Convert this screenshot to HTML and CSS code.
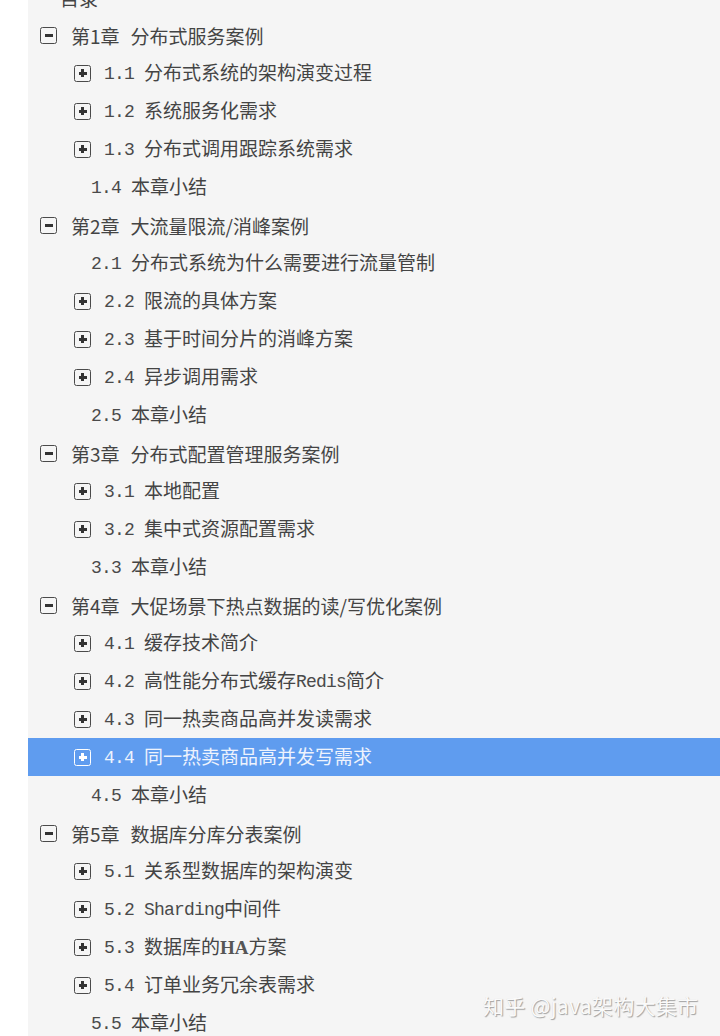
FILE: index.html
```html
<!DOCTYPE html>
<html lang="zh-CN">
<head>
<meta charset="utf-8">
<title>目录</title>
<link rel="stylesheet" href="styles.css">
</head>
<body>
<div class="panel">
  <div class="row title">目录</div>

  <div class="row chapter"><span class="box minus"></span><span class="txt">第1章<span class="ct">分布式服务案例</span></span></div>
  <div class="row sec"><span class="box plus"></span><span class="txt"><span class="n">1.1 </span>分布式系统的架构演变过程</span></div>
  <div class="row sec"><span class="box plus"></span><span class="txt"><span class="n">1.2 </span>系统服务化需求</span></div>
  <div class="row sec"><span class="box plus"></span><span class="txt"><span class="n">1.3 </span>分布式调用跟踪系统需求</span></div>
  <div class="row leaf"><span class="txt"><span class="n">1.4 </span>本章小结</span></div>

  <div class="row chapter"><span class="box minus"></span><span class="txt">第2章<span class="ct">大流量限流/消峰案例</span></span></div>
  <div class="row leaf"><span class="txt"><span class="n">2.1 </span>分布式系统为什么需要进行流量管制</span></div>
  <div class="row sec"><span class="box plus"></span><span class="txt"><span class="n">2.2 </span>限流的具体方案</span></div>
  <div class="row sec"><span class="box plus"></span><span class="txt"><span class="n">2.3 </span>基于时间分片的消峰方案</span></div>
  <div class="row sec"><span class="box plus"></span><span class="txt"><span class="n">2.4 </span>异步调用需求</span></div>
  <div class="row leaf"><span class="txt"><span class="n">2.5 </span>本章小结</span></div>

  <div class="row chapter"><span class="box minus"></span><span class="txt">第3章<span class="ct">分布式配置管理服务案例</span></span></div>
  <div class="row sec"><span class="box plus"></span><span class="txt"><span class="n">3.1 </span>本地配置</span></div>
  <div class="row sec"><span class="box plus"></span><span class="txt"><span class="n">3.2 </span>集中式资源配置需求</span></div>
  <div class="row leaf"><span class="txt"><span class="n">3.3 </span>本章小结</span></div>

  <div class="row chapter"><span class="box minus"></span><span class="txt">第4章<span class="ct">大促场景下热点数据的读/写优化案例</span></span></div>
  <div class="row sec"><span class="box plus"></span><span class="txt"><span class="n">4.1 </span>缓存技术简介</span></div>
  <div class="row sec"><span class="box plus"></span><span class="txt"><span class="n">4.2 </span>高性能分布式缓存<span class="n">Redis</span>简介</span></div>
  <div class="row sec"><span class="box plus"></span><span class="txt"><span class="n">4.3 </span>同一热卖商品高并发读需求</span></div>
  <div class="row sec active"><span class="box plus"></span><span class="txt"><span class="n">4.4 </span>同一热卖商品高并发写需求</span></div>
  <div class="row leaf"><span class="txt"><span class="n">4.5 </span>本章小结</span></div>

  <div class="row chapter"><span class="box minus"></span><span class="txt">第5章<span class="ct">数据库分库分表案例</span></span></div>
  <div class="row sec"><span class="box plus"></span><span class="txt"><span class="n">5.1 </span>关系型数据库的架构演变</span></div>
  <div class="row sec"><span class="box plus"></span><span class="txt"><span class="n">5.2 Sharding</span>中间件</span></div>
  <div class="row sec"><span class="box plus"></span><span class="txt"><span class="n">5.3 </span>数据库的<span class="ha">HA</span>方案</span></div>
  <div class="row sec"><span class="box plus"></span><span class="txt"><span class="n">5.4 </span>订单业务冗余表需求</span></div>
  <div class="row leaf"><span class="txt"><span class="n">5.5 </span>本章小结</span></div>
</div>
<div class="watermark">知乎 @java架构大集市</div>
</body>
</html>
```

FILE: styles.css
```css
html, body {
  margin: 0;
  padding: 0;
  background: #ffffff;
  overflow: hidden;
  height: 1036px;
}

body {
  font-family: "Noto Sans CJK SC", "Noto Sans", sans-serif;
  color: #444444;
  position: relative;
}

.panel {
  margin-left: 28px;
  margin-top: -22px;
  background: #f5f5f5;
  min-height: 1100px;
  display: flex;
  flex-direction: column;
}

.row {
  height: 38px;
  display: flex;
  align-items: center;
  font-size: 19px;
  white-space: nowrap;
  line-height: 1;
}

.title {
  padding-left: 32px;
}

.chapter {
  padding-left: 12px;
  gap: 14px;
}

.ct {
  margin-left: 11px;
}

.sec {
  padding-left: 46px;
  gap: 13px;
}

.leaf {
  padding-left: 63px;
}

.n {
  font-family: "Liberation Mono", "DejaVu Sans Mono", monospace;
  font-size: 18px;
  letter-spacing: -0.8px;
  white-space: pre;
  color: #4a4a4a;
  position: relative;
  top: -1px;
}

.ha {
  font-family: "Liberation Serif", serif;
  font-size: 19px;
  font-weight: bold;
  color: #555555;
}

.box {
  width: 15px;
  height: 15px;
  border: 1.6px solid #4a4a4a;
  border-radius: 2.5px;
  position: relative;
  flex: none;
}

.minus::before {
  content: "";
  position: absolute;
  left: 3.5px;
  top: 6px;
  width: 8px;
  height: 3px;
  background: #333333;
}

.plus::before,
.plus::after {
  content: "";
  position: absolute;
  background: #333333;
}

.plus::before {
  left: 3.5px;
  top: 6px;
  width: 8px;
  height: 3px;
}

.plus::after {
  left: 6px;
  top: 3.5px;
  width: 3px;
  height: 8px;
}

.active {
  background: #5f9cef;
  color: #eef3fd;
}

.active .n {
  color: #eef3fd;
}

.active .box {
  border-color: #ffffff;
}

.active .plus::before,
.active .plus::after {
  background: #ffffff;
}

.watermark {
  position: absolute;
  left: 483px;
  top: 990px;
  font-family: "Noto Sans CJK SC", sans-serif;
  font-size: 21px;
  letter-spacing: 0.3px;
  color: #fafafa;
  text-shadow: 1px 1px 1px rgba(0, 0, 0, 0.35), -0.5px -0.5px 0 rgba(0, 0, 0, 0.08);
  white-space: nowrap;
}
```
